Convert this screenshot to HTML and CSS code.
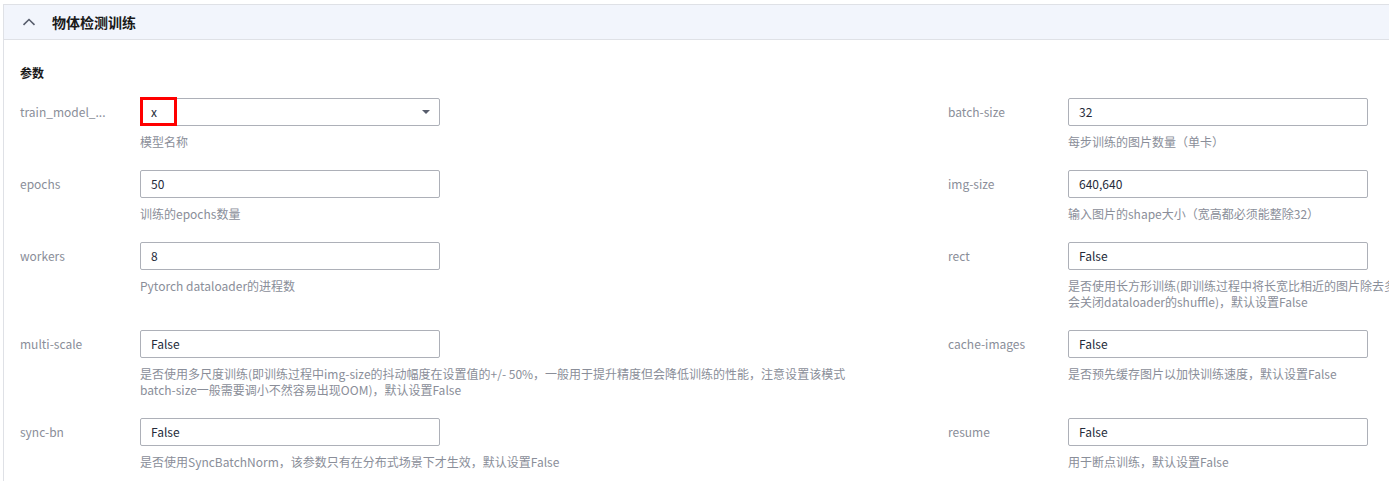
FILE: index.html
```html
<!DOCTYPE html>
<html lang="zh-CN">
<head>
  <meta charset="UTF-8" />
  <meta name="viewport" content="width=device-width, initial-scale=1.0"/>
  <title>物体检测训练</title>
  <link rel="stylesheet" href="styles.css">
</head>
<body>
  <div class="panel">
    <div class="panel-head">
      <svg class="chevron" width="14" height="8" viewBox="0 0 14 8">
        <path d="M1.5 6.8 L7 1.5 L12.5 6.8" fill="none" stroke="#575d6c" stroke-width="1.6"/>
      </svg>
      <span class="panel-title">物体检测训练</span>
    </div>

    <div class="panel-body">
      <div class="section-title">参数</div>

      <div class="fields">
        <div class="field">
          <div class="label" title="train_model_name">train_model_...</div>
          <div class="control">
            <div class="select">
              <span class="value">x</span>
              <span class="caret"></span>
              <span class="mark"></span>
            </div>
            <div class="hint">模型名称</div>
          </div>
        </div>
        <div class="field">
          <div class="label">batch-size</div>
          <div class="control">
            <div class="input">32</div>
            <div class="hint">每步训练的图片数量（单卡）</div>
          </div>
        </div>

        <div class="field">
          <div class="label">epochs</div>
          <div class="control">
            <div class="input">50</div>
            <div class="hint">训练的epochs数量</div>
          </div>
        </div>
        <div class="field">
          <div class="label">img-size</div>
          <div class="control">
            <div class="input">640,640</div>
            <div class="hint">输入图片的shape大小（宽高都必须能整除32）</div>
          </div>
        </div>

        <div class="field">
          <div class="label">workers</div>
          <div class="control">
            <div class="input">8</div>
            <div class="hint">Pytorch dataloader的进程数</div>
          </div>
        </div>
        <div class="field">
          <div class="label">rect</div>
          <div class="control">
            <div class="input">False</div>
            <div class="hint">是否使用长方形训练(即训练过程中将长宽比相近的图片除去多余的填充后组成同一批次，开启该参数<br>会关闭dataloader的shuffle)，默认设置False</div>
          </div>
        </div>

        <div class="field">
          <div class="label">multi-scale</div>
          <div class="control">
            <div class="input">False</div>
            <div class="hint">是否使用多尺度训练(即训练过程中img-size的抖动幅度在设置值的+/- 50%，一般用于提升精度但会降低训练的性能，注意设置该模式<br>batch-size一般需要调小不然容易出现OOM)，默认设置False</div>
          </div>
        </div>
        <div class="field">
          <div class="label">cache-images</div>
          <div class="control">
            <div class="input">False</div>
            <div class="hint">是否预先缓存图片以加快训练速度，默认设置False</div>
          </div>
        </div>

        <div class="field">
          <div class="label">sync-bn</div>
          <div class="control">
            <div class="input">False</div>
            <div class="hint">是否使用SyncBatchNorm，该参数只有在分布式场景下才生效，默认设置False</div>
          </div>
        </div>
        <div class="field">
          <div class="label">resume</div>
          <div class="control">
            <div class="input">False</div>
            <div class="hint">用于断点训练，默认设置False</div>
          </div>
        </div>
      </div>
    </div>
  </div>
</body>
</html>
```

FILE: styles.css
```css
body {
  margin: 0;
  padding: 4px 0 0 3px;
  background: #fff;
  font-family: "Noto Sans CJK SC", "Noto Sans", sans-serif;
  font-size: 12px;
  color: #252b3a;
  overflow: hidden;
}

.panel {
  width: 1880px;
  border: 1px solid #dfe1e6;
  border-right: none;
  border-bottom: none;
  min-height: 480px;
}

.panel-head {
  display: flex;
  align-items: center;
  height: 34px;
  padding-left: 18px;
  background: #f2f5fc;
  border-bottom: 1px solid #dfe1e6;
}

.chevron {
  margin-right: 16px;
}

.panel-title {
  font-size: 14px;
  font-weight: bold;
  color: #191919;
}

.panel-body {
  padding: 24px 0 0 16px;
}

.section-title {
  font-size: 12px;
  font-weight: bold;
  line-height: 18px;
  color: #191919;
  margin-bottom: 16px;
}

.fields {
  display: grid;
  grid-template-columns: 928px 928px;
  row-gap: 20px;
}

.field {
  display: flex;
  align-items: flex-start;
}

.label {
  width: 120px;
  line-height: 28px;
  color: #8a8e99;
  white-space: nowrap;
}

.control {
  width: 720px;
}

.input,
.select {
  position: relative;
  box-sizing: border-box;
  width: 300px;
  height: 28px;
  line-height: 26px;
  padding: 0 10px;
  border: 1px solid #adb0b8;
  border-radius: 2px;
  color: #252b3a;
}

.caret {
  position: absolute;
  right: 9px;
  top: 11px;
  width: 0;
  height: 0;
  border-left: 4px solid transparent;
  border-right: 4px solid transparent;
  border-top: 4px solid #575d6c;
}

/* cadre rouge d'annotation par-dessus le select */
.mark {
  position: absolute;
  left: -1px;
  top: -2px;
  width: 37px;
  height: 29px;
  box-sizing: border-box;
  border: 3px solid #f00;
}

.hint {
  margin-top: 8px;
  line-height: 16px;
  color: #8a8e99;
}
```
